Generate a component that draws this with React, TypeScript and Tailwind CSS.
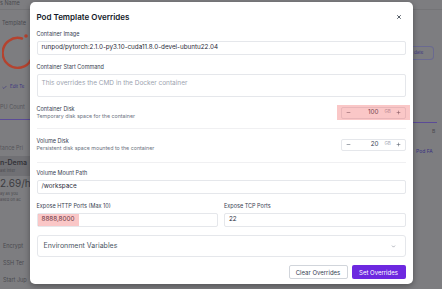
import { Check, ChevronDown, Minus, Plus, X } from "lucide-react";

function Label({ children }: { children: React.ReactNode }) {
  return <div className="text-[5.5px] leading-[8px] text-[#374151]">{children}</div>;
}

function Stepper({ value }: { value: string }) {
  return (
    <div className="flex h-[12px] w-[65px] items-center rounded-[2px] border border-[#e5e7eb] bg-white">
      <span className="flex w-[13px] justify-center text-[#4b5563]">
        <Minus className="h-[5px] w-[5px]" strokeWidth={2.5} />
      </span>
      <span className="flex-1 text-right text-[6.3px] text-[#374151]">{value}</span>
      <span className="ml-[6px] w-[7px] text-[4.5px] text-[#9ca3af]">GB</span>
      <span className="flex w-[13px] justify-center text-[#4b5563]">
        <Plus className="h-[5px] w-[5px]" strokeWidth={2.5} />
      </span>
    </div>
  );
}

function Background() {
  return (
    <div className="flex h-[289px] w-[442px] justify-between overflow-hidden bg-[#7d7d80] text-[#4a4a4f]">
      {/* left column, mostly hidden under the dialog */}
      <div className="flex w-[60px] flex-col text-[5.5px]">
        <div className="h-[10px] border-b border-[#747477] leading-[7px]">s Name</div>
        <div className="mt-[9px] pl-[2px] leading-[8px]">Template</div>
        <div className="mt-[5px] pl-[2px]">
          <svg width="34" height="38" viewBox="0 0 34 38" fill="none">
            <path d="M20 6.5 A15 15 0 1 0 29 14" stroke="#b4432f" strokeWidth="2.4" strokeLinecap="round" />
            <circle cx="24" cy="4" r="1.8" fill="#b4432f" />
          </svg>
        </div>
        <div className="mt-[14px] flex items-center gap-[3px] pl-[2px] text-[#3b3380]">
          <Check className="h-[5px] w-[5px]" strokeWidth={3} />
          <span className="text-[4.5px]">Edit Te</span>
        </div>
        <div className="mt-[12px] leading-[8px] text-[#55555a]">PU Count</div>
        <div className="mt-[8px] h-px bg-[#5b4b97]" />
        <div className="mt-[24px] leading-[8px] text-[#55555a]">tance Pri</div>
        <div className="mt-[4px] bg-[#707074] py-[2px]">
          <div className="text-[7px] font-semibold leading-[10px] text-[#333338]">n-Dema</div>
          <div className="text-[4px] leading-[6px]">ast inter</div>
        </div>
        <div className="text-[10px] leading-[14px] text-[#3b3b40]">2.69/hr</div>
        <div className="text-[4px] leading-[7px]">ay as you</div>
        <div className="text-[4px] leading-[5px]">ased on ac</div>
        <div className="mt-[40px] pl-[3px] leading-[8px]">Encrypt</div>
        <div className="mt-[9px] pl-[3px] leading-[8px]">SSH Ter</div>
        <div className="mt-[9px] pl-[3px] leading-[8px]">Start Jup</div>
      </div>
      {/* right column */}
      <div className="flex w-[30px] flex-col text-[5px]">
        <div className="h-[10px] border-b border-[#747477]" />
        <div className="mt-[36px] flex h-[14px] w-[22px] items-center rounded-r-[4px] border border-l-0 border-[#6a6a90] pl-[2px] text-[4.5px] text-[#3b3380]">
          date
        </div>
        <div className="mt-[62px] h-px w-[25px] bg-[#5b4b97]" />
        <div className="mt-[4px] pl-[20px] leading-[8px]">B</div>
        <div className="mt-[12px] pl-[4px] leading-[8px] text-[#3b3380]">Pod FA</div>
      </div>
    </div>
  );
}

export default function App() {
  return (
    <div className="relative h-[289px] w-[442px] overflow-hidden font-['Inter',sans-serif]">
      <Background />

      <div className="absolute inset-0 flex justify-center pt-[2px]">
        <div className="flex h-[282px] w-[383px] flex-col rounded-[5px] bg-white px-[7px] pt-[9px] shadow-[0_2px_6px_rgba(0,0,0,0.35)]">
          {/* header */}
          <div className="flex h-[12px] items-center justify-between">
            <h2 className="text-[8px] font-semibold text-[#111827]">Pod Template Overrides</h2>
            <X className="mr-[4px] h-[6px] w-[6px] text-[#1f2937]" strokeWidth={3} />
          </div>

          <div className="mt-[7px]">
            <Label>Container Image</Label>
          </div>
          <div className="mt-[3px] flex h-[14px] items-center rounded-[2px] border border-[#e5e7eb] px-[4px] text-[6.3px] text-[#1f2937]">
            runpod/pytorch:2.1.0-py3.10-cuda11.8.0-devel-ubuntu22.04
          </div>

          <div className="mt-[8px]">
            <Label>Container Start Command</Label>
          </div>
          <div className="mt-[3px] h-[23px] rounded-[2px] border border-[#e5e7eb] px-[4px] pt-[4px] text-[6.5px] text-[#9ca3af]">
            This overrides the CMD in the Docker container
          </div>

          {/* container disk */}
          <div className="flex items-center justify-between border-b border-[#f0f0f2] pb-[8px] pt-[8px]">
            <div>
              <Label>Container Disk</Label>
              <div className="text-[5.3px] leading-[7px] text-[#6b7280]">Temporary disk space for the container</div>
            </div>
            <div className="relative -mr-[4px] px-[4px] py-[1.5px]">
              <Stepper value="100" />
              <div className="pointer-events-none absolute inset-0 bg-[#ef4444]/30" />
            </div>
          </div>

          {/* volume disk */}
          <div className="flex items-center justify-between border-b border-[#f0f0f2] pb-[10px] pt-[8px]">
            <div>
              <Label>Volume Disk</Label>
              <div className="text-[5.3px] leading-[7px] text-[#6b7280]">Persistent disk space mounted to the container</div>
            </div>
            <Stepper value="20" />
          </div>

          <div className="mt-[6px]">
            <Label>Volume Mount Path</Label>
          </div>
          <div className="mt-[3px] flex h-[14px] items-center rounded-[2px] border border-[#e5e7eb] px-[4px] text-[6.3px] text-[#1f2937]">
            /workspace
          </div>

          <div className="mt-[8px] grid grid-cols-2 gap-[6px]">
            <div>
              <Label>Expose HTTP Ports (Max 10)</Label>
              <div className="mt-[3px] flex h-[14px] items-center rounded-[2px] border border-[#e5e7eb] text-[6.3px] text-[#1f2937]">
                <span className="relative flex h-full w-[41px] items-center px-[4px]">
                  8888,8000
                  <span className="pointer-events-none absolute inset-0 bg-[#ef4444]/30" />
                </span>
              </div>
            </div>
            <div>
              <Label>Expose TCP Ports</Label>
              <div className="mt-[3px] flex h-[14px] items-center rounded-[2px] border border-[#e5e7eb] px-[4px] text-[6.3px] text-[#1f2937]">
                22
              </div>
            </div>
          </div>

          <div className="mt-[8px] flex h-[22px] items-center justify-between rounded-[3px] border border-[#e5e7eb] pl-[6px] pr-[9px]">
            <span className="text-[7px] text-[#4b5563]">Environment Variables</span>
            <ChevronDown className="h-[5px] w-[5px] text-[#6b7280]" strokeWidth={2.5} />
          </div>

          <div className="mt-[8px] flex justify-end gap-[4px]">
            <button className="h-[14px] w-[59px] rounded-[2px] border border-[#d1d5db] bg-white text-[6px] text-[#374151]">
              Clear Overrides
            </button>
            <button className="h-[14px] w-[54px] rounded-[2px] bg-[#6d28e0] text-[6px] text-white">
              Set Overrides
            </button>
          </div>
        </div>
      </div>
    </div>
  );
}
